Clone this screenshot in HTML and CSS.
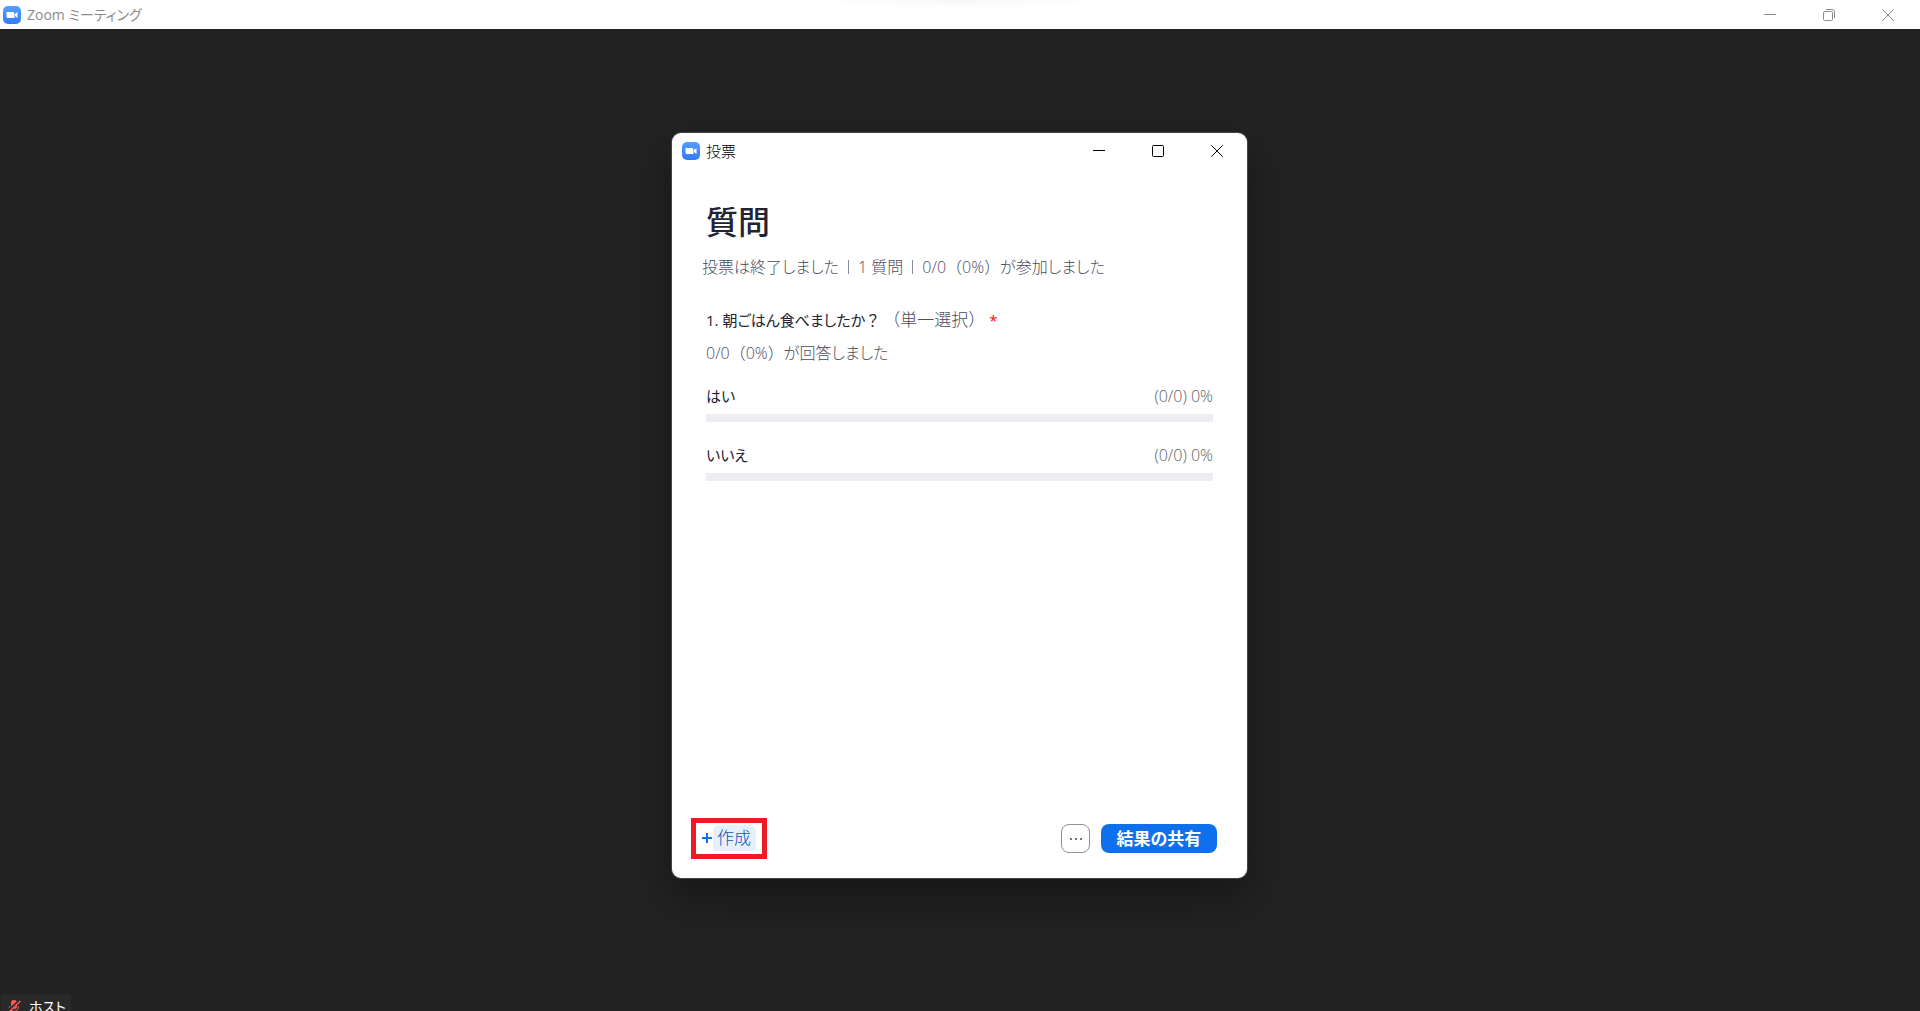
FILE: index.html
```html
<!DOCTYPE html>
<html lang="ja">
<head>
    <meta charset="UTF-8">
    <meta name="viewport" content="width=device-width, initial-scale=1.0">
    <title>Zoom ミーティング</title>
    <link rel="stylesheet" href="styles.css">
</head>
<body>

<!-- メインウィンドウのタイトルバー -->
<header class="titlebar main-titlebar">
    <svg class="logo" viewBox="0 0 18 18">
        <defs>
            <linearGradient id="logoBlue" x1="0" y1="0" x2="0" y2="1">
                <stop offset="0" stop-color="#559dff"/>
                <stop offset="1" stop-color="#347bf8"/>
            </linearGradient>
        </defs>
        <rect width="18" height="18" rx="5" fill="url(#logoBlue)"/>
        <path d="M3.500 6h6.500a1.500 1.500 0 0 1 1.500 1.500V12H5A1.500 1.500 0 0 1 3.500 10.500zM12 8l2.500-2v6L12 10z" fill="#fff"/>
    </svg>
    <span class="titlebar-text">Zoom ミーティング</span>
    <div class="window-buttons">
        <button type="button" aria-label="最小化">
            <svg viewBox="0 0 12 12"><path d="M0 5.500h12"/></svg>
        </button>
        <button type="button" aria-label="元に戻す">
            <svg viewBox="0 0 12 12"><rect x=".5" y="2.500" width="9" height="9" rx="1"/><path d="M3 .5h6a2.500 2.500 0 0 1 2.500 2.500v6"/></svg>
        </button>
        <button type="button" aria-label="閉じる">
            <svg viewBox="0 0 12 12"><path d="M.3.3l11.400 11.400M11.700.3L.3 11.700"/></svg>
        </button>
    </div>
</header>

<main class="stage">
    <!-- 投票ウィンドウ -->
    <section class="dialog">
        <div class="titlebar">
            <svg class="logo" viewBox="0 0 18 18">
                <rect width="18" height="18" rx="5" fill="url(#logoBlue)"/>
                <path d="M3.500 6h6.500a1.500 1.500 0 0 1 1.500 1.500V12H5A1.500 1.500 0 0 1 3.500 10.500zM12 8l2.500-2v6L12 10z" fill="#fff"/>
            </svg>
            <span class="titlebar-text">投票</span>
            <div class="window-buttons">
                <button type="button" aria-label="最小化">
                    <svg viewBox="0 0 12 12"><path d="M0 5.500h12"/></svg>
                </button>
                <button type="button" aria-label="最大化">
                    <svg viewBox="0 0 12 12"><rect x=".5" y=".5" width="11" height="11" rx="1"/></svg>
                </button>
                <button type="button" aria-label="閉じる">
                    <svg viewBox="0 0 12 12"><path d="M.3.3l11.400 11.400M11.700.3L.3 11.700"/></svg>
                </button>
            </div>
        </div>

        <div class="content">
            <h1>質問</h1>
            <p class="summary">
                <span>投票は終了しました</span>
                <span class="divider"></span>
                <span>1 質問</span>
                <span class="divider"></span>
                <span>0/0<span class="full">（0%）</span>が参加しました</span>
            </p>

            <p class="question">1. 朝ごはん食べましたか<span class="full">？</span><span class="type full">（単一選択）</span><span class="required">*</span></p>
            <p class="answered">0/0<span class="full">（0%）</span>が回答しました</p>

            <ul class="options">
                <li>
                    <div class="option-row"><span>はい</span><span class="count">(0/0) 0%</span></div>
                    <div class="bar"></div>
                </li>
                <li>
                    <div class="option-row"><span>いいえ</span><span class="count">(0/0) 0%</span></div>
                    <div class="bar"></div>
                </li>
            </ul>
        </div>

        <div class="actions">
            <div class="highlight">
                <button type="button" class="create">
                    <svg viewBox="0 0 10 10"><path d="M5 0v10M0 5h10"/></svg>
                    <span>作成</span>
                </button>
            </div>
            <button type="button" class="more" aria-label="その他">
                <svg viewBox="0 0 12 2"><path d="M0 0h2v2H0zM5 0h2v2H5zM10 0h2v2h-2z"/></svg>
            </button>
            <button type="button" class="share">結果の共有</button>
        </div>
    </section>

    <!-- 参加者名 -->
    <div class="participant">
        <svg viewBox="0 0 12 14">
            <rect x="2" y="0" width="6" height="9" rx="3" fill="#ff5a5a"/>
            <path d="M.7 6v1a4.300 4.300 0 0 0 8.600 0V6M5 11v2" fill="none" stroke="#ff5a5a"/>
            <path d="M-.5 11L11 .5" stroke="#292929" stroke-width="3"/>
            <path d="M.5 11.500L11.500 1" stroke="#ff5a5a" stroke-width="1.500"/>
        </svg>
        <span>ホスト</span>
    </div>
</main>

</body>
</html>
```

FILE: styles.css
```css
* {
    box-sizing: border-box;
}
body {
    display: flex;
    flex-direction: column;
    height: 100vh;
    margin: 0;
    overflow: hidden;
    background-color: #222;
    color: #232333;
    font-family: "Open Sans", "Noto Sans CJK JP", sans-serif;
    font-feature-settings: "palt";
    font-size: 16px;
    line-height: 24px;
}
h1, p, ul {
    margin: 0;
    padding: 0;
}
button {
    padding: 0;
    border: none;
    background: none;
    font: inherit;
    font-feature-settings: inherit;
    cursor: pointer;
}
.full {
    font-feature-settings: normal;
}
.titlebar {
    display: flex;
    align-items: center;
    height: 36px;
    padding: 0 1px 0 10px;
    color: #000;
    font-size: 15px;
}
.logo {
    width: 18px;
    height: 18px;
}
.titlebar-text {
    margin-left: 6px;
}
.window-buttons {
    display: flex;
    height: 100%;
    margin-left: auto;
}
.window-buttons button {
    display: flex;
    align-items: center;
    justify-content: center;
    width: 59px;
    color: inherit;
}
.window-buttons svg {
    width: 12px;
    height: 12px;
    fill: none;
    stroke: currentColor;
}
.main-titlebar {
    flex: none;
    height: 29px;
    padding: 0 3px;
    background: radial-gradient(ellipse 150px 9px at 50% 0, #f7f7f7, #fff);
    color: #8c8c8c;
    font-size: 14px;
}
.stage {
    position: relative;
    flex: 1;
    padding: 104px 1px 0 0;
}
.dialog {
    display: flex;
    flex-direction: column;
    width: 575px;
    min-height: 745px;
    margin: 0 auto;
    border-radius: 9px;
    background-color: #fff;
    box-shadow: 0 0 0 1px #444, 0 20px 44px rgba(0, 0, 0, 0.35);
}
.dialog .titlebar-text {
    font-weight: 300;
}
.content {
    flex: 1;
    padding: 33px 34px 0;
}
h1 {
    font-size: 32px;
    font-weight: 500;
    line-height: 40px;
}
.summary {
    display: flex;
    align-items: center;
    margin: 13px 0 29px -4px;
    color: #4c4c5c;
    font-weight: 300;
}
.divider {
    width: 1px;
    height: 14px;
    margin: 0 9px;
    background-color: #8c8ca0;
}
.question {
    font-size: 15px;
}
.type {
    margin-left: 3px;
    color: #4c4c5c;
    font-size: 17px;
    font-weight: 300;
}
.required {
    margin-left: 4px;
    color: #f00;
}
.answered {
    margin-top: 9px;
    color: #4c4c5c;
    font-weight: 300;
}
.options {
    margin-top: 19px;
    list-style: none;
}
.options li {
    margin-bottom: 21px;
}
.option-row {
    display: flex;
    justify-content: space-between;
    font-size: 15px;
}
.count {
    color: #5c5c64;
    font-size: 16px;
    font-weight: 300;
}
.bar {
    height: 8px;
    margin-top: 6px;
    background-color: #ededf2;
}
.actions {
    display: flex;
    align-items: center;
    padding: 0 30px 19px 19px;
}
.highlight {
    margin-right: auto;
    padding: 2px 6px 3px;
    border: 5px solid #ed1c24;
}
.create {
    display: flex;
    align-items: center;
    gap: 1px;
    color: #0956b5;
}
.create svg {
    width: 10px;
    height: 10px;
    stroke: #0e71eb;
    stroke-width: 2;
}
.create span {
    height: 26px;
    padding: 0 5px 0 4px;
    border-radius: 7px 7px 2px 2px;
    background-color: #e6f0fd;
    font-size: 17px;
    font-weight: 300;
    line-height: 26px;
}
.more {
    display: flex;
    align-items: center;
    justify-content: center;
    width: 29px;
    height: 29px;
    margin-right: 11px;
    border: 1px solid #909096;
    border-radius: 8px;
}
.more svg {
    width: 12px;
    height: 2px;
    fill: #747487;
}
.share {
    width: 116px;
    height: 29px;
    border-radius: 8px;
    background-color: #0e71eb;
    color: #fff;
    font-size: 17px;
    font-weight: 700;
    line-height: 27px;
}
.participant {
    position: absolute;
    bottom: -8px;
    left: 1px;
    display: flex;
    align-items: center;
    gap: 8px;
    height: 24px;
    padding: 0 5px 0 8px;
    background-color: #292929;
    color: #fff;
    font-size: 14px;
}
.participant svg {
    width: 12px;
    height: 14px;
}
```
